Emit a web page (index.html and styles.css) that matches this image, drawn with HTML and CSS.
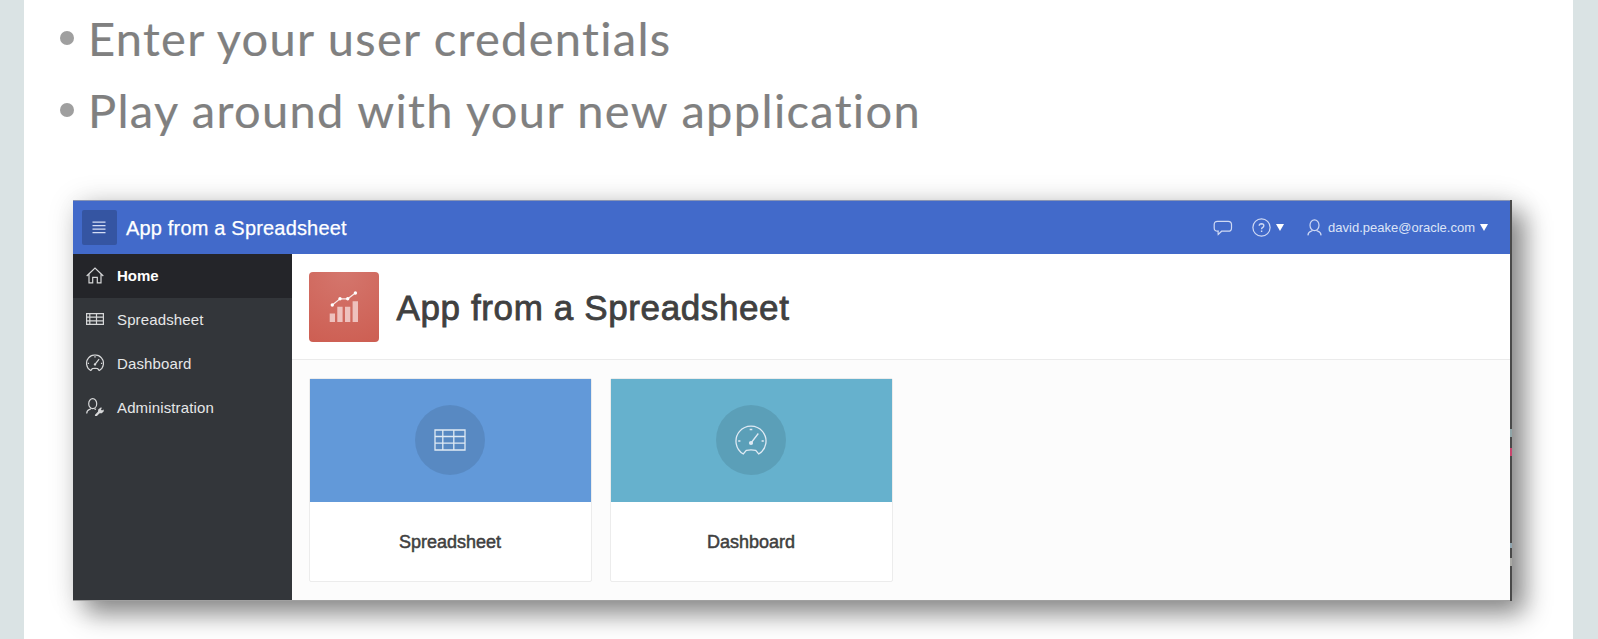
FILE: index.html
```html
<!DOCTYPE html>
<html lang="en">
<head>
<meta charset="utf-8">
<title>App from a Spreadsheet</title>
<link rel="stylesheet" href="styles.css">
</head>
<body>
<svg class="defs" width="0" height="0">
  <symbol id="gauge" viewBox="0 0 32 30">
    <path d="M8.3 29A15 15 0 1 1 23.7 29L20.7 25.3Q16 24.6 11.3 25.3Z" fill="none" stroke="currentColor"/>
    <path d="M16 18L23.3 8.5M14.7 4.5H17.3M3.2 16H5.4M26.6 16H28.8" fill="none" stroke="currentColor"/>
    <circle cx="16" cy="18" r="2.1" fill="currentColor"/>
  </symbol>
</svg>
<main class="slide">
  <ul class="steps">
    <li class="step"><span class="dot"></span><span class="line-one">Enter your user credentials</span></li>
    <li class="step"><span class="dot"></span><span class="line-two">Play around with your new application</span></li>
  </ul>
  <section class="app">
    <div class="frame">
      <header class="topbar">
        <div class="menu"><svg width="14" height="13" viewBox="0 0 14 13"><path d="M.5 1.2H13.5M.5 4.6H13.5M.5 8.1H13.5M.5 11.6H13.5" stroke="#d5def5" stroke-width="1.2"/></svg></div>
        <span class="brand">App from a Spreadsheet</span>
        <div class="tools">
          <svg class="chat" width="20" height="16" viewBox="0 0 20 16"><path d="M4.5 1.3H15.2Q18.5 1.3 18.5 4.6V7.9Q18.5 11.2 15.2 11.2H8.6L5.2 14.5Q5 12.8 5.2 11.2H4.6Q1.2 11.2 1.2 7.9V4.6Q1.2 1.3 4.5 1.3Z" fill="none" stroke="currentColor" stroke-width="1.2"/></svg>
          <svg class="help" width="19" height="19" viewBox="0 0 19 19"><circle cx="9.5" cy="9.5" r="8.6" fill="none" stroke="currentColor" stroke-width="1.2"/><path d="M7.2 7.7Q7.3 5.7 9.5 5.7Q11.9 5.8 11.8 7.7Q11.8 8.8 10.4 9.7Q9.6 10.2 9.6 11.3M9.6 12.6V13.9" fill="none" stroke="currentColor" stroke-width="1.4"/></svg>
          <i class="caret"></i>
          <svg class="person" width="15" height="17" viewBox="0 0 15 17"><path d="M.9 16.4Q1.2 13 4.2 12.1L5.6 11.5M9.4 11.5L10.8 12.1Q13.8 13 14.1 16.4" fill="none" stroke="currentColor" stroke-width="1.2"/><ellipse cx="7.5" cy="6.2" rx="4.5" ry="5.4" fill="none" stroke="currentColor" stroke-width="1.2"/></svg>
          <span class="user">david.peake@oracle.com</span>
          <i class="caret"></i>
        </div>
      </header>
      <div class="body">
        <nav class="sidebar">
          <a class="item active"><svg width="18" height="17" viewBox="0 0 18 17"><path d="M.7 9L9 1L17.3 9M3 7V15.8H6.7V10.3H11.3V15.8H15V7" fill="none" stroke="currentColor" stroke-width="1.2"/></svg>Home</a>
          <a class="item"><svg width="18" height="12" viewBox="0 0 18 12"><path d="M.6.6H17.4V11.4H.6ZM.6 4.2H17.4M.6 7.8H17.4M3.8.6V11.4M10.5.6V11.4" fill="none" stroke="currentColor" stroke-width="1.2"/></svg>Spreadsheet</a>
          <a class="item"><svg width="18" height="18" viewBox="0 0 32 31" stroke-width="2.2"><use href="#gauge" width="32" height="30"/></svg>Dashboard</a>
          <a class="item"><svg width="18" height="18" viewBox="0 0 18 18"><path d="M.7 15.5Q.8 12.4 3.6 11.4L5 10.7M8.3 10.7L10 11.4" fill="none" stroke="currentColor" stroke-width="1.2"/><ellipse cx="6.7" cy="5.7" rx="4" ry="5" fill="none" stroke="currentColor" stroke-width="1.2"/><path d="M10.1 17.2L13.2 14" stroke="currentColor" stroke-width="2.3" stroke-linecap="round"/><path d="M12 14.2L12.2 11.6L14.7 9.5L16 9.7L14.9 11.4L16 12.5L17.6 11.5L17.8 13.3L15.8 15.2L13.4 15.2Z" fill="currentColor"/></svg>Administration</a>
        </nav>
        <div class="content">
          <div class="hero">
            <div class="logo"><svg width="30" height="32" viewBox="0 0 30 32"><path d="M.7 22.5H6V31H.7ZM8.3 15.7H13.6V31H8.3ZM16 15.7H21.3V31H16ZM23.6 10.3H29V31H23.6Z" fill="#eec1bd"/><path d="M3.3 14L11 7.8H18.7L26.4 2" fill="none" stroke="#f9e9e7" stroke-width="1.2"/><g fill="#fff"><circle cx="3.3" cy="14" r="1.7"/><circle cx="11" cy="7.8" r="1.7"/><circle cx="18.7" cy="7.8" r="1.7"/><circle cx="26.4" cy="2" r="1.7"/></g></svg></div>
            <h1 class="title">App from a Spreadsheet</h1>
          </div>
          <div class="cards">
            <article class="card">
              <div class="cover blue"><div class="disc"><svg width="32" height="22" viewBox="0 0 32 22"><path d="M1 1H31V21H1ZM1 7.5H31M1 14.2H31M8.8 1V21M19.8 1V21" fill="none" stroke="currentColor" stroke-width="1.3"/></svg></div></div>
              <h2 class="label">Spreadsheet</h2>
            </article>
            <article class="card">
              <div class="cover teal"><div class="disc"><svg width="32" height="30" viewBox="0 0 32 30" stroke-width="1.3"><use href="#gauge" width="32" height="30"/></svg></div></div>
              <h2 class="label">Dashboard</h2>
            </article>
          </div>
        </div>
      </div>
    </div>
  </section>
</main>
</body>
</html>
```
FILE: styles.css
```css
* { box-sizing: border-box; }
body { margin: 0; height: 639px; overflow: hidden; background: #dae3e4; font-family: "Liberation Sans", Arial, sans-serif; }
.defs { position: absolute; }
.slide { height: 639px; margin: 0 25px 0 24px; background: #fff; overflow: hidden; }
.steps { list-style: none; margin: 0; padding: 3px 0 0 36px; height: 200px; }
.step { display: flex; align-items: center; height: 71.5px; color: #808080; font: 47px/71px Lato, Carlito, sans-serif; white-space: nowrap; -webkit-text-stroke: .2px; }
.dot { width: 14px; height: 14px; margin: -1px 14px 0 0; border-radius: 50%; background: #9f9f9f; }
.line-one { letter-spacing: 1.3px; }
.line-two { letter-spacing: 1.34px; }
.app { width: 1439px; height: 401px; margin-left: 49px; padding-right: 2px; box-shadow: 13px 13px 24px rgba(0,0,0,.42), 2px 2px 28px rgba(0,0,0,.14);
  background: linear-gradient(#4a4a4a 0 229px, #8fa5a8 229px 237px, #4a4a4a 237px 248px, #c9456d 248px 256px, #4a4a4a 256px 343px, #8fa5b0 343px 348px, #4a4a4a 348px 358px, #a8a8a4 358px 366px, #4a4a4a 366px); }
.frame { height: 401px; display: flex; flex-direction: column; border-top: 1px solid #8995b4; border-bottom: 1px solid #a0a0a0; background: #fcfcfc; }
.topbar { flex: 0 0 53px; display: flex; align-items: center; padding-left: 9px; background: #426aca; color: #fff; }
.menu { width: 35px; height: 35px; padding-right: 1px; display: grid; place-items: center; border-radius: 2px; background: #3555a2; }
.brand { margin: 2px 0 0 9px; font-size: 20px; letter-spacing: .18px; -webkit-text-stroke: .25px; }
.tools { display: flex; align-items: center; margin-left: auto; padding-right: 22px; color: #cfd9f4; }
.help { margin-left: 19px; }
.person { margin: 0 6px 0 23px; }
.user { font-size: 13px; color: #dce4f7; }
.caret { width: 0; margin-left: 5px; border: 4px solid transparent; border-top: 7px solid #fff; border-bottom: 0; }
.body { flex: 1; display: flex; min-height: 0; }
.sidebar { width: 218.5px; background: #33363a; color: #e6e7e8; }
.item { display: flex; align-items: center; gap: 13px; height: 44px; padding: 0 0 2px 13px; font-size: 15px; letter-spacing: .13px; }
.active { background: #242529; color: #fff; font-weight: bold; letter-spacing: 0; }
.item svg { color: #d6d7d8; }
.content { flex: 1; }
.hero { display: flex; align-items: center; height: 106px; padding-left: 17px; border-bottom: 1px solid #ebebeb; background: #fff; }
.logo { width: 70px; height: 70px; display: grid; place-items: center; border-radius: 4px; background: radial-gradient(circle at 50% 0, #d4766d, #cd5e52); }
.title { margin: 3px 0 0 18px; font-size: 35px; letter-spacing: .62px; font-weight: normal; color: #404040; -webkit-text-stroke: .8px; }
.cards { display: flex; gap: 18px; padding: 18px 0 0 17px; }
.card { width: 283px; height: 204px; border: 1px solid #ececec; border-radius: 2px; background: #fff; }
.cover { height: 123px; padding: 0 1px 1px 0; display: grid; place-items: center; }
.blue { background: #6299d9; }
.teal { background: #66b1cd; }
.disc { width: 70px; height: 70px; display: grid; place-items: center; border-radius: 50%; background: rgba(0,0,0,.1); color: #dfeaf4; }
.label { margin: 0; text-align: center; font-size: 18px; font-weight: normal; line-height: 81px; color: #404040; -webkit-text-stroke: .5px; }
```
